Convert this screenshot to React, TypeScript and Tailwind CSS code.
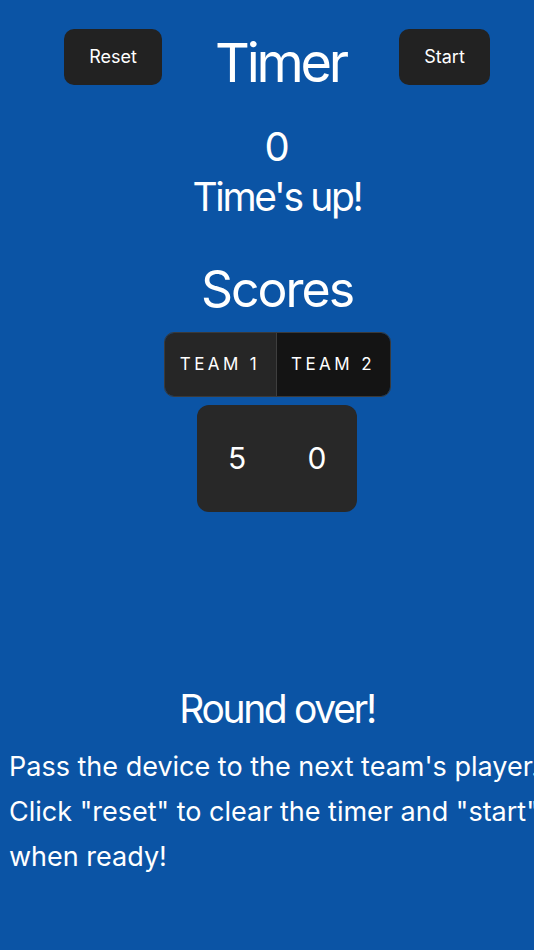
import React from 'react';

export default function App() {
  return (
    <div
      className="min-h-screen w-full overflow-hidden bg-[#0b54a5] text-white"
      style={{ fontFamily: 'Inter, "Noto Sans", sans-serif' }}
    >
      <div className="w-[554px] flex flex-col items-center">
        {/* header */}
        <div className="w-full flex items-start pl-[64px] pt-[29px]">
          <button className="w-[98px] h-[56px] rounded-[10px] bg-[#222222] text-[18px] leading-none">
            Reset
          </button>
          <h1 className="w-[237px] mt-[6px] text-center text-[54px] leading-[56px] tracking-[-0.06em]">
            Timer
          </h1>
          <button className="w-[91px] h-[56px] rounded-[10px] bg-[#222222] text-[18px] leading-none">
            Start
          </button>
        </div>

        <div className="mt-[36px] text-[40px] leading-[40px]">0</div>
        <div className="mt-[6px] text-[39px] leading-[48px] tracking-[-0.06em]">Time's up!</div>

        <h2 className="mt-[40px] text-[50px] leading-[56px] tracking-[-0.04em]">Scores</h2>

        {/* team toggle */}
        <div className="mt-[15px] flex h-[65px] rounded-[10px] border border-[#3a3a3a] overflow-hidden">
          <div className="w-[112px] flex items-center justify-center bg-[#262626] border-r border-[#3e3e3e] text-[17px] tracking-[0.2em]">
            TEAM 1
          </div>
          <div className="w-[113px] flex items-center justify-center bg-[#141414] text-[17px] tracking-[0.2em]">
            TEAM 2
          </div>
        </div>

        <div className="mt-[8px] w-[160px] h-[107px] rounded-[12px] bg-[#282828] grid grid-cols-2 items-center">
          <div className="text-center text-[30px]">5</div>
          <div className="text-center text-[30px]">0</div>
        </div>

        <h3 className="mt-[173px] text-[39px] leading-[48px] tracking-[-0.06em]">Round over!</h3>

        <p className="mt-[11px] self-start pl-[9px] whitespace-nowrap text-[27px] leading-[45px]">
          Pass the device to the next team's player.
          <br />
          Click "reset" to clear the timer and "start"
          <br />
          when ready!
        </p>
      </div>
    </div>
  );
}
